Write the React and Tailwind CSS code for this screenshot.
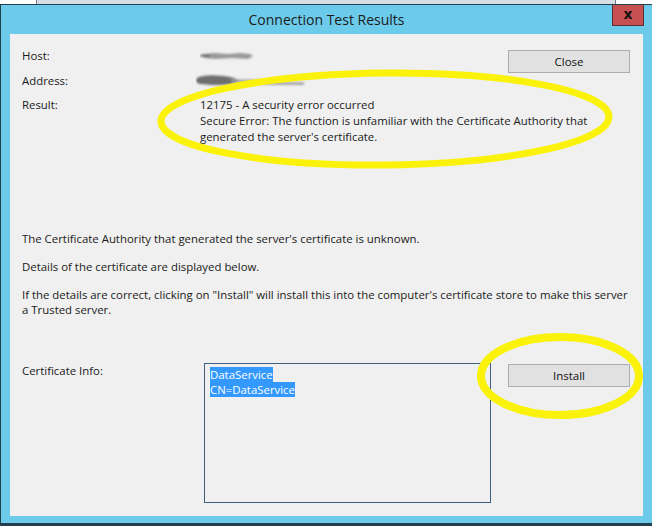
import React from "react";

const font = { fontFamily: '"Open Sans", "Noto Sans", sans-serif' };

function Smudge({ variant }) {
  if (variant === "host") {
    return (
      <svg width="60" height="14" viewBox="0 0 60 14" className="block">
        <defs>
          <filter id="sm1" x="-20%" y="-50%" width="140%" height="200%">
            <feGaussianBlur stdDeviation="0.9" />
          </filter>
        </defs>
        <g filter="url(#sm1)" fill="#8a8a8a">
          <path d="M2 5 L14 4 L28 5 L40 4 L50 5 L53 7 L48 10 L32 9 L16 10 L4 9 Z" opacity="0.85" />
          <rect x="0" y="6" width="10" height="1.5" fill="#555" />
        </g>
      </svg>
    );
  }
  return (
    <svg width="112" height="16" viewBox="0 0 112 16" className="block">
      <defs>
        <filter id="sm2" x="-20%" y="-50%" width="140%" height="200%">
          <feGaussianBlur stdDeviation="1" />
        </filter>
      </defs>
      <g filter="url(#sm2)">
        <path d="M1 5 C8 1 22 2 34 4 C40 5 44 8 40 10 C30 13 14 12 4 11 C0 10 -1 7 1 5 Z" fill="#6e6e6e" />
        <path d="M34 6 L70 7 L92 9 L108 9 L108 12 L80 12 L50 11 L36 10 Z" fill="#9a9a9a" opacity="0.8" />
      </g>
    </svg>
  );
}

function WinButton({ children }) {
  return (
    <button className="w-[122px] h-[23px] border border-[#adadad] bg-[#e1e1e1] text-[11.5px] text-[#111] leading-none flex items-center justify-center">
      {children}
    </button>
  );
}

export default function App() {
  return (
    <div className="relative w-[652px] h-[526px] bg-white overflow-hidden flex flex-col" style={font}>
      {/* window behind the dialog */}
      <div className="h-[4px] flex shrink-0">
        <div className="w-[36px] bg-white" />
        <div className="w-px bg-[#707880]" />
        <div className="w-[578px] bg-[#d6dde4]" />
        <div className="w-px bg-[#707880]" />
        <div className="flex-1 bg-white" />
      </div>

      {/* dialog frame */}
      <div className="flex-1 flex flex-col bg-[#6ccbea] border-l border-t border-b-[3px] border-[#24404e] pl-[9px] pr-[9px] pb-[7px]">
        {/* title bar */}
        <div className="h-[29px] shrink-0 relative flex items-center justify-center">
          <span className="text-[14px] text-[#1b1b1b] pb-[1px]" style={font}>Connection Test Results</span>
          <div className="absolute right-[-1px] top-0 w-[32px] h-[21px] bg-[#c75050] border border-[#5a3030] border-t-0 flex items-center justify-center">
            <span className="text-[14px] font-bold text-[#111] leading-none pb-[2px]" style={{ fontFamily: '"DejaVu Sans", sans-serif' }}>x</span>
          </div>
        </div>

        {/* client area */}
        <div className="flex-1 bg-[#f0f0f0] flex flex-col pl-[12px] pr-[13px] pt-[14px] text-[11.4px] text-[#1a1a1a] whitespace-nowrap">
          <div className="flex">
            <div className="flex-1 min-w-0 grid grid-cols-[178px_minmax(0,1fr)] leading-[16px]">
              <div>Host:</div>
              <div className="h-[16px] flex items-center"><Smudge variant="host" /></div>
              <div className="mt-[9px]">Address:</div>
              <div className="mt-[9px] h-[16px] flex items-center -ml-[4px]"><Smudge variant="addr" /></div>
              <div className="mt-[8px]">Result:</div>
              <div className="mt-[8px]">
                <div>12175 - A security error occurred</div>
                <div>Secure Error: The function is unfamiliar with the Certificate Authority that</div>
                <div>generated the server's certificate.</div>
              </div>
            </div>
            <div className="pt-[2px] shrink-0">
              <WinButton>Close</WinButton>
            </div>
          </div>

          <div className="mt-[86px] leading-[16px]">The Certificate Authority that generated the server's certificate is unknown.</div>
          <div className="mt-[12px] leading-[16px]">Details of the certificate are displayed below.</div>
          <div className="mt-[12px] leading-[15px]">
            <div>If the details are correct, clicking on "Install" will install this into the computer's certificate store to make this server</div>
            <div>a Trusted server.</div>
          </div>

          <div className="mt-[46px] flex items-start">
            <div className="w-[182px] leading-[16px]">Certificate Info:</div>
            <div className="w-[287px] h-[140px] border border-[#3f5f7e] bg-[#f0f0f0] pt-[3px] pl-[5px] leading-[15px]">
              <div><span className="bg-[#3399ff] text-white">DataService</span></div>
              <div><span className="bg-[#3399ff] text-white">CN=DataService</span></div>
            </div>
            <div className="ml-auto pt-[1px]">
              <WinButton>Install</WinButton>
            </div>
          </div>
        </div>
      </div>

      {/* highlighter marks drawn over the dialog */}
      <svg className="absolute inset-0 pointer-events-none" width="652" height="526" viewBox="0 0 652 526">
        <ellipse cx="385" cy="119" rx="224" ry="46" fill="none" stroke="#fbf20c" strokeWidth="7" transform="rotate(-0.6 385 119)" />
        <ellipse cx="560" cy="376" rx="79" ry="39" fill="none" stroke="#fbf20c" strokeWidth="8" />
      </svg>
    </div>
  );
}
